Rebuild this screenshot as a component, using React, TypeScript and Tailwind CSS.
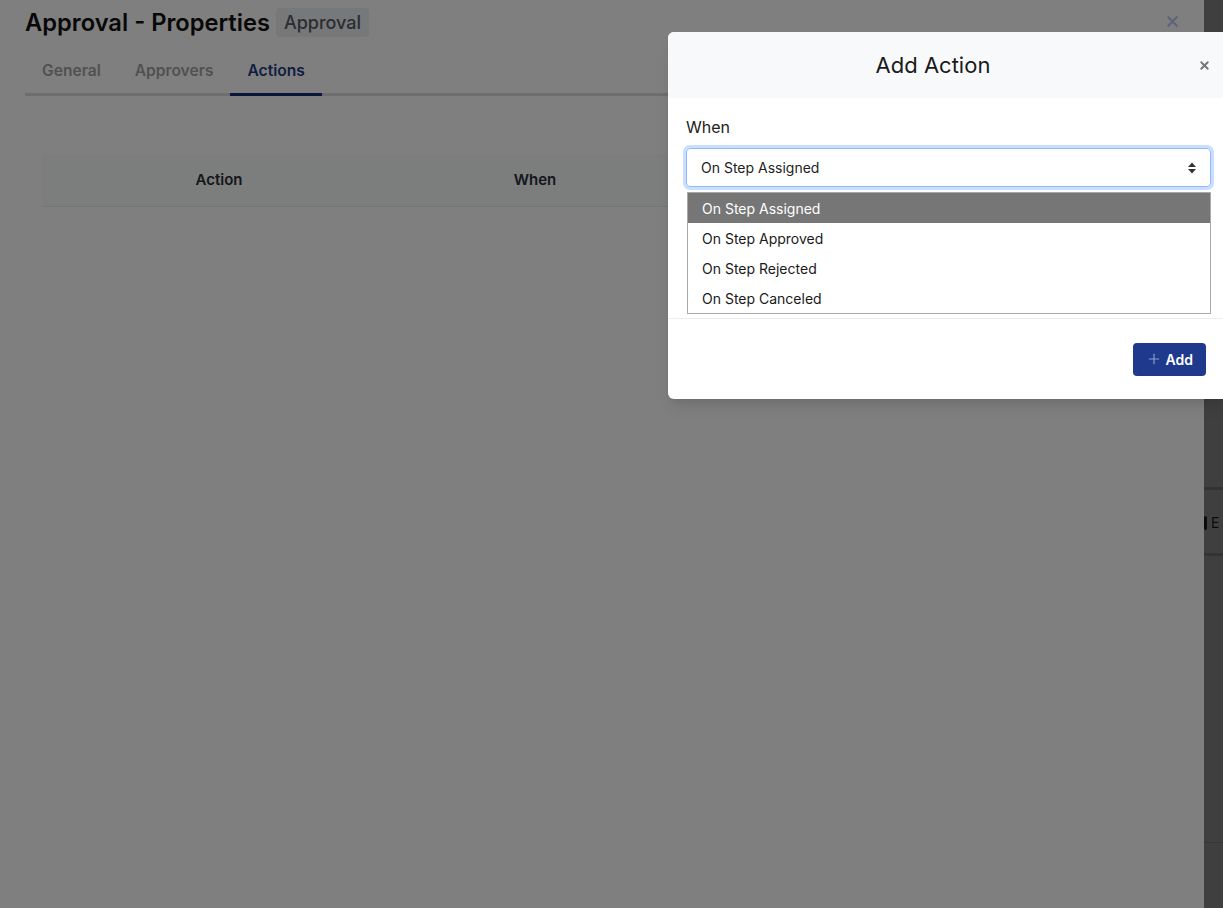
import { X, Plus } from "lucide-react";

const options = ["On Step Assigned", "On Step Approved", "On Step Rejected", "On Step Canceled"];

function Drawer() {
  return (
    <div className="relative h-full w-[1204px] bg-white">
      <div className="flex items-center gap-[6px] pl-[25px] pt-[5px]">
        <h1 className="text-[23.7px] font-semibold text-[#111]">Approval - Properties</h1>
        <span className="rounded px-[8px] py-[1px] text-[18px] font-medium text-[#555a63] bg-[#eef0f4]">Approval</span>
      </div>
      <button className="absolute right-[23px] top-[13px] text-[#b6c6ee]">
        <X size={17} strokeWidth={3} />
      </button>
      <div className="mx-[25px] mt-[18px] flex border-b-[3px] border-[#dcdde2] text-[15.6px] font-semibold">
        <div className="px-[17px] pb-[11px] text-[#a3a3a3]">General</div>
        <div className="px-[17px] pb-[11px] text-[#a3a3a3]">Approvers</div>
        <div className="-mb-[3px] border-b-[3px] border-[#0d2d7a] px-[17px] pb-[11px] text-[#1f3c85]">Actions</div>
      </div>
      <div className="mx-[42px] mt-[58px] flex h-[53px] items-center border-b border-[#e9ebeb] bg-[#f9fbfa] text-[15px] font-semibold text-[#2a2f38]">
        <div className="w-[354px] text-center">Action</div>
        <div className="w-[278px] text-center">When</div>
      </div>
    </div>
  );
}

function SortArrows() {
  return (
    <svg width="10" height="14" viewBox="0 0 10 14" className="text-[#333]">
      <path d="M5 1.5 L9 6 H1 Z" fill="currentColor" />
      <path d="M5 12.5 L9 8 H1 Z" fill="currentColor" />
    </svg>
  );
}

function Modal() {
  return (
    <div className="absolute left-[668px] top-[32px] w-[560px] overflow-hidden rounded-md bg-white shadow-lg">
      <div className="relative flex h-[66px] items-center justify-center bg-[#f8f9fb] pr-[30px]">
        <h2 className="text-[22px] text-[#1a1a1a]">Add Action</h2>
        <button className="absolute right-[17px] top-[27px] text-[#777]">
          <X size={13} strokeWidth={3.5} />
        </button>
      </div>
      <div className="relative h-[220px] px-[18px] pt-[17px]">
        <label className="block text-[16px] text-[#222]">When</label>
        <div className="mt-[9px] flex h-[39px] w-[525px] items-center justify-between rounded border border-[#8fb9f7] pl-[14px] pr-[13px] text-[14px] text-[#222] shadow-[0_0_0_3px_rgba(13,110,253,0.22)]">
          <span>On Step Assigned</span>
          <SortArrows />
        </div>
        <div className="absolute left-[19px] top-[94px] w-[524px] border border-[#aaa] bg-white text-[14px]">
          {options.map((o, i) => (
            <div key={o} className={`flex h-[30px] items-center pl-[14px] ${i === 0 ? "bg-[#767676] text-white" : "text-[#1a1a1a]"}`}>
              {o}
            </div>
          ))}
        </div>
      </div>
      <div className="flex h-[81px] items-center justify-end border-t border-[#eceef0] pr-[22px]">
        <button className="flex h-[33px] items-center gap-[4px] rounded bg-[#1f3a8d] px-[13px] text-[14px] font-semibold text-white">
          <Plus size={16} strokeWidth={1.75} className="text-[#8d9cc8]" />
          Add
        </button>
      </div>
    </div>
  );
}

export default function App() {
  return (
    <div className="relative h-[908px] w-[1223px] overflow-hidden bg-white" style={{ fontFamily: "Inter, 'Noto Sans', sans-serif" }}>
      {/* page behind the drawer */}
      <div className="absolute inset-0 bg-white">
        <div className="absolute left-[1204px] top-[487px] h-[3px] w-full bg-[#ccc]" />
        <div className="absolute left-[1204px] top-[512px] flex items-center gap-[4px]">
          <div className="h-[14px] w-[3px] rounded-sm bg-[#333]" />
          <span className="text-[14px] text-[#333]">E</span>
        </div>
        <div className="absolute left-[1204px] top-[553px] h-[3px] w-full bg-[#ccc]" />
        <div className="absolute left-[1204px] top-[842px] h-[1px] w-full bg-[#ddd]" />
      </div>
      <div className="absolute inset-0 bg-black/50" />
      <div className="absolute inset-y-0 left-0">
        <Drawer />
      </div>
      <div className="absolute inset-0 bg-black/50" />
      <Modal />
    </div>
  );
}
